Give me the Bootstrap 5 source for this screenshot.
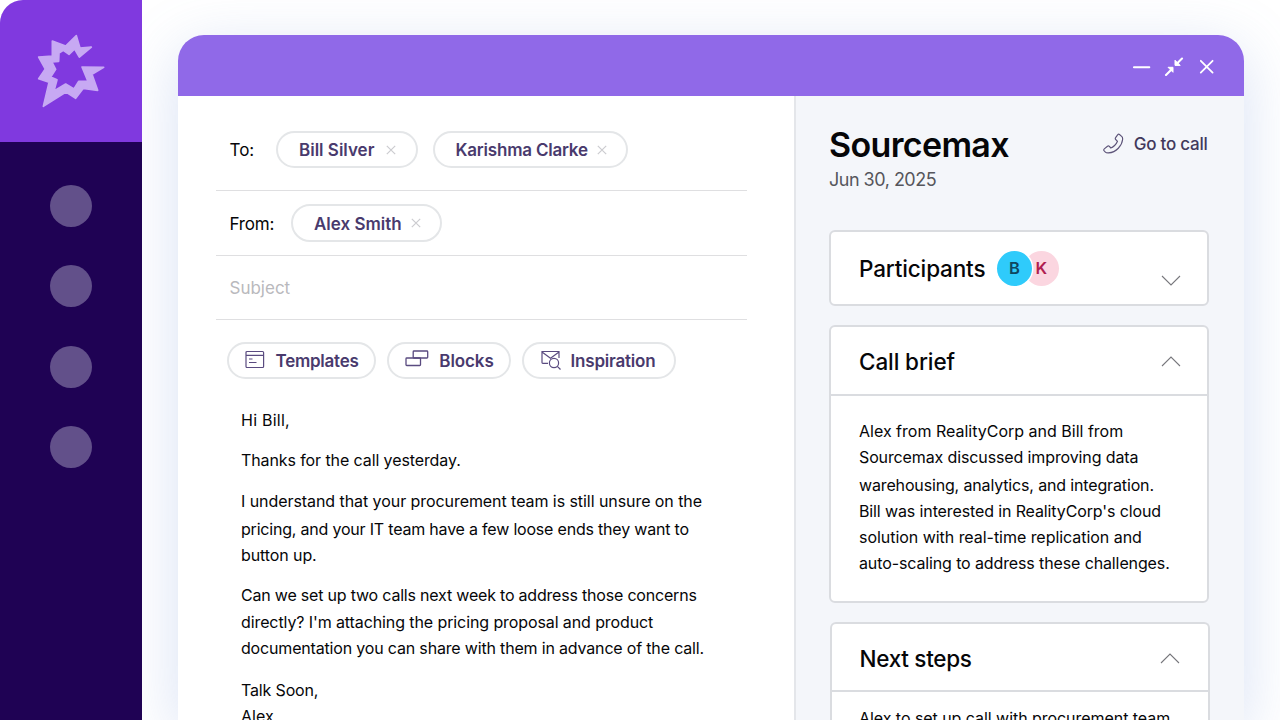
<!DOCTYPE html>
<html lang="en">
<head>
<meta charset="utf-8">
<meta name="viewport" content="width=device-width, initial-scale=1">
<title>Email composer</title>
<link href="https://cdn.jsdelivr.net/npm/bootstrap@5.3.0/dist/css/bootstrap.min.css" rel="stylesheet">
<style>
body { font-family: Inter, "Open Sans", sans-serif; font-size: 16px; color: #060608; background: #fff; width: 1280px; height: 720px; }
.ln { display: block; white-space: nowrap; line-height: 26.2px; }
.side { width: 142px; background: linear-gradient(#8039df 142px, #1f0254 142px); border-top-left-radius: 23px; z-index: 1; }
.side-logo { height: 142px; }
.dots { gap: 38.3px; padding-top: 43px; }
.dot { width: 42px; height: 42px; background: #62508a; }
.stage { padding: 35px 36px 0 36px; }
.win { width: 1066px; height: 685px; border-radius: 26px 26px 0 0; box-shadow: 0 14px 60px rgba(110, 145, 215, .27); }
.bar { height: 61px; background: #9069e8; padding-right: 29px; gap: 13px; }
.mail { width: 616px; background: #fff; }
.panel { background: #f4f6fa; border-left: 2px solid #e4e6ea; padding: 0 36px 0 33px; }
.field { margin: 0 47px 0 38px; padding-left: 13.5px; border-bottom: 1.6px solid #dfdfe1; font-size: 17px; }
.field span span, .t-to, .t-fr, .t-su { padding-top: 3px; }
.f-to { height: 95px; padding-top: 13px; }
.f-from { height: 64.5px; }
.f-sub { height: 64.5px; color: #b9b9bd; }
.pill { height: 37.5px; border: 2px solid #e4e6e8; border-radius: 19px; font-size: 17px; font-weight: 580; color: #493a6d; white-space: nowrap; background: #fff; }
.tools { padding: 21.5px 0 0 48.5px; gap: 11.3px; }
.tools span span { padding-top: 3px; }
.letter { padding: 28px 0 0 63px; }
.letter p { margin-bottom: 14.2px; }
.low { margin-top: 1.8px; }
.name { font-size: 34px; font-weight: 600; line-height: 40px; }
.date { font-size: 18px; line-height: 24px; color: #56565c; }
.call { font-size: 17px; font-weight: 500; color: #42395c; gap: 10px; }
.box { border: 2px solid #dadce0; border-radius: 6px; width: 380px; }
.box h2 { font-size: 22.5px; font-weight: 500; margin: 0; line-height: 28px; padding-top: 1px; }
.box-top { padding: 0 26px 0 28px; }
.who { width: 35px; height: 35px; font-size: 16.5px; font-weight: 580; }
.who-b { background: #2fcbfb; color: #0e4660; z-index: 1; box-shadow: 0 0 0 1.5px #fff; }
.who-k { background: #fbd6e0; color: #b01f50; margin-left: -8px; }
svg { display: block; flex: none; }
.l1 { letter-spacing: .25px; } .l2 { letter-spacing: -.1px; } .l3 { letter-spacing: -.065px; }
.l4 { letter-spacing: -.2px; } .l5 { letter-spacing: -.1px; } .l6 { letter-spacing: -.2px; }
.l7 { letter-spacing: -.1px; } .l8 { letter-spacing: -.175px; } .l9 { letter-spacing: -.15px; }
.r2 { letter-spacing: -.12px; } .r3 { letter-spacing: -.15px; } .r4 { letter-spacing: -.12px; }
.r5 { letter-spacing: -.04px; } .r6 { letter-spacing: -.12px; } .r7 { letter-spacing: -.05px; }
.t-nm { letter-spacing: -.65px; } .t-dt { letter-spacing: -.5px; } .t-pa { letter-spacing: -.15px; }
.t-cb { letter-spacing: -.1px; } .t-ns { letter-spacing: -.3px; } .t-gc { letter-spacing: -.25px; padding-top: 2px; }
.t-kc { letter-spacing: -.2px; } .t-te { letter-spacing: -.25px; } .t-in { letter-spacing: -.2px; } .t-bl { letter-spacing: -.1px; } .t-fr { letter-spacing: -.2px; }
</style>
</head>
<body class="overflow-hidden d-flex">
<aside class="side overflow-hidden flex-shrink-0 position-relative">
  <div class="side-logo">
    <svg width="142" height="142" viewBox="0 0 426 426"><path d="M229 107 240 144 274 141 238 171 224 147 207 163 190 151 177 159 176 184 156 186 167 208 152 231 171 239 162 273 197 252 222 267 236 244 264 244 246 201 311 202 276 223 293 271 250 265 227 295 198 276 130 319 147 247 116 236 136 207 116 171 157 168 157 123 197 138Z" fill="#c7a9f3" stroke="#c7a9f3" stroke-width="5" stroke-linejoin="round"/></svg>
  </div>
  <div class="dots d-flex flex-column align-items-center">
    <span class="dot rounded-circle"></span><span class="dot rounded-circle"></span><span class="dot rounded-circle"></span><span class="dot rounded-circle"></span>
  </div>
</aside>
<main class="stage flex-grow-1">
  <div class="win overflow-hidden d-flex flex-column">
    <div class="bar d-flex align-items-center justify-content-end flex-shrink-0">
      <svg width="18" height="20" viewBox="0 0 18 20"><path d="M.9 11.200H16.300" stroke="#fff" stroke-width="2" stroke-linecap="round"/></svg>
      <svg width="20" height="20" viewBox="0 0 20 20"><path d="M2 19 7 14M18 2.500 13 7.500" stroke="#fff" stroke-width="2.1" stroke-linecap="round"/><path d="M4 11.300H9V16.300ZM11 4.200V9.400H16.200Z" fill="#fff" stroke="#fff" stroke-linejoin="round"/></svg>
      <svg width="18" height="18" viewBox="0 0 18 18"><path d="M3.800 3.800 15.600 15.600M15.600 3.800 3.800 15.600" stroke="#fff" stroke-width="1.8" stroke-linecap="round"/></svg>
    </div>
    <div class="d-flex flex-grow-1">
      <section class="mail flex-shrink-0">
        <div class="field f-to d-flex align-items-center">
          <span class="t-to" style="width:46.5px">To:</span>
          <span class="pill d-flex align-items-center" style="width:142px;padding-left:21px"><span class="t-bs">Bill Silver</span><svg class="ms-auto" style="margin-right:20px" width="10" height="10" viewBox="0 0 10 10"><path d="M.8.8 9.2 9.2M9.2.8.8 9.2" stroke="#ccccd0" stroke-width="1.2"/></svg></span>
          <span class="pill d-flex align-items-center" style="width:195.5px;padding-left:21px;margin-left:14.5px"><span class="t-kc">Karishma Clarke</span><svg class="ms-auto" style="margin-right:19px" width="10" height="10" viewBox="0 0 10 10"><path d="M.8.8 9.2 9.2M9.2.8.8 9.2" stroke="#ccccd0" stroke-width="1.2"/></svg></span>
        </div>
        <div class="field f-from d-flex align-items-center">
          <span class="t-fr" style="width:61px">From:</span>
          <span class="pill d-flex align-items-center" style="width:151px;padding-left:21.500px"><span class="t-as">Alex Smith</span><svg class="ms-auto" style="margin-right:19px" width="10" height="10" viewBox="0 0 10 10"><path d="M.8.8 9.2 9.2M9.2.8.8 9.2" stroke="#ccccd0" stroke-width="1.2"/></svg></span>
        </div>
        <div class="field f-sub d-flex align-items-center"><span class="t-su">Subject</span></div>
        <div class="tools d-flex">
          <span class="pill d-flex align-items-center" style="width:149.500px;padding-left:16.500px"><svg width="20" height="20" viewBox="0 0 20 20" fill="none" stroke="#5a4b80" stroke-width="1.2"><rect x="1" y="1.500" width="17.600" height="16" rx="1"/><path d="M1 5.300H18.600M4 9H7.500M4 12.500H11.500"/></svg><span class="t-te" style="margin-left:10.500px">Templates</span></span>
          <span class="pill d-flex align-items-center" style="width:123.500px;padding-left:16px"><svg width="24" height="20" viewBox="0 0 24 20" fill="none" stroke="#5a4b80" stroke-width="1.3"><rect x="1" y="8" width="14.500" height="7.500" rx=".8"/><rect x="8.200" y="1" width="14.500" height="7" rx=".8"/></svg><span class="t-bl" style="margin-left:10px">Blocks</span></span>
          <span class="pill d-flex align-items-center" style="width:153.500px;padding-left:16.500px"><svg width="20" height="20" viewBox="0 0 20 20" fill="none" stroke="#5a4b80" stroke-width="1.200"><path d="M7 13.300H1.800Q1 13.300 1 12.500V1.500H18V8M1 2 9.500 8.200 18 2"/><circle cx="13" cy="13" r="4.600"/><path d="M16.300 16.300 19.500 19.500"/></svg><span class="t-in" style="margin-left:10px">Inspiration</span></span>
        </div>
        <div class="letter">
          <p><span class="ln"><span class="l1">Hi Bill,</span></span></p>
          <p><span class="ln"><span class="l2">Thanks for the call yesterday.</span></span></p>
          <p><span class="ln"><span class="l3">I understand that your procurement team is still unsure on the</span></span><span class="ln low"><span class="l4">pricing, and your IT team have a few loose ends they want to</span></span><span class="ln"><span class="l5">button up.</span></span></p>
          <p><span class="ln"><span class="l6">Can we set up two calls next week to address those concerns</span></span><span class="ln"><span class="l7">directly? I'm attaching the pricing proposal and product</span></span><span class="ln"><span class="l8">documentation you can share with them in advance of the call.</span></span></p>
          <p class="mb-0"><span class="ln" style="margin-top:16px"><span class="l9">Talk Soon,</span></span><span class="ln"><span class="l10">Alex</span></span></p>
        </div>
      </section>
      <aside class="panel flex-grow-1">
        <div class="d-flex justify-content-between" style="padding-top:29px">
          <div><div class="name"><span class="t-nm">Sourcemax</span></div><div class="date" style="margin-top:3px"><span class="t-dt">Jun 30, 2025</span></div></div>
          <div class="call d-flex align-items-center" style="height:38px;margin-right:2.500px"><svg width="21" height="21" viewBox="0 0 21 21" fill="none" stroke="#5d5479" stroke-width="1.150" stroke-linejoin="round" style="margin-top:-2px"><path d="M14.600 1.800Q15.500 .800 16.500 1.500L18.900 3.600Q19.800 4.500 19.600 6.500C19 12.500 13.500 19.300 5.500 19.900Q3.200 20 2.400 19.200L1 17.600Q.4 16.700 1.300 15.900L4.500 13.200Q5.500 12.500 6.400 13.400L7.800 15C10 14.500 13.500 11 14.500 8.300L12.700 6.500Q11.900 5.600 12.600 4.600Z"/></svg><span class="t-gc">Go to call</span></div>
        </div>
        <div class="box bg-white d-flex" style="height:76px;margin-top:38px"><div class="box-top d-flex w-100"><h2 class="align-self-center"><span class="t-pa">Participants</span></h2><span class="who who-b rounded-circle d-flex align-items-center justify-content-center align-self-center position-relative" style="margin-left:11.500px">B</span><span class="who who-k rounded-circle d-flex align-items-center justify-content-center align-self-center">K</span><svg class="ms-auto" style="margin-top:43px" width="20" height="12" viewBox="0 0 20 12"><path d="M1 1 10 10 19 1" fill="none" stroke="#77777c" stroke-width="1.1"/></svg></div></div>
        <div class="box bg-white" style="height:277.500px;margin-top:19px">
          <div class="box-top d-flex align-items-center justify-content-between" style="height:68.500px;padding-top:2px;border-bottom:2px solid #dadce0"><h2><span class="t-cb">Call brief</span></h2><svg width="20" height="12" viewBox="0 0 20 12"><path d="M1 11 10 2 19 11" fill="none" stroke="#77777c" stroke-width="1.1"/></svg></div>
          <div style="padding:22px 0 0 28px"><span class="ln"><span class="r1">Alex from RealityCorp and Bill from</span></span><span class="ln"><span class="r2">Sourcemax discussed improving data</span></span><span class="ln low"><span class="r3">warehousing, analytics, and integration.</span></span><span class="ln"><span class="r4">Bill was interested in RealityCorp's cloud</span></span><span class="ln"><span class="r5">solution with real-time replication and</span></span><span class="ln"><span class="r6">auto-scaling to address these challenges.</span></span></div>
        </div>
        <div class="box bg-white border-bottom-0 rounded-bottom-0 overflow-hidden" style="height:98px;margin:19.500px 0 0 1px">
          <div class="box-top d-flex align-items-center justify-content-between" style="height:68px;padding-top:2px;padding-right:28px;padding-left:27.500px;border-bottom:2px solid #dadce0"><h2><span class="t-ns">Next steps</span></h2><svg width="20" height="12" viewBox="0 0 20 12"><path d="M1 11 10 2 19 11" fill="none" stroke="#77777c" stroke-width="1.1"/></svg></div>
          <div style="padding:12.500px 0 0 27px"><span class="ln"><span class="r7">Alex to set up call with procurement team</span></span></div>
        </div>
      </aside>
    </div>
  </div>
</main>
<script src="https://cdn.jsdelivr.net/npm/bootstrap@5.3.0/dist/js/bootstrap.bundle.min.js"></script>
</body>
</html>
